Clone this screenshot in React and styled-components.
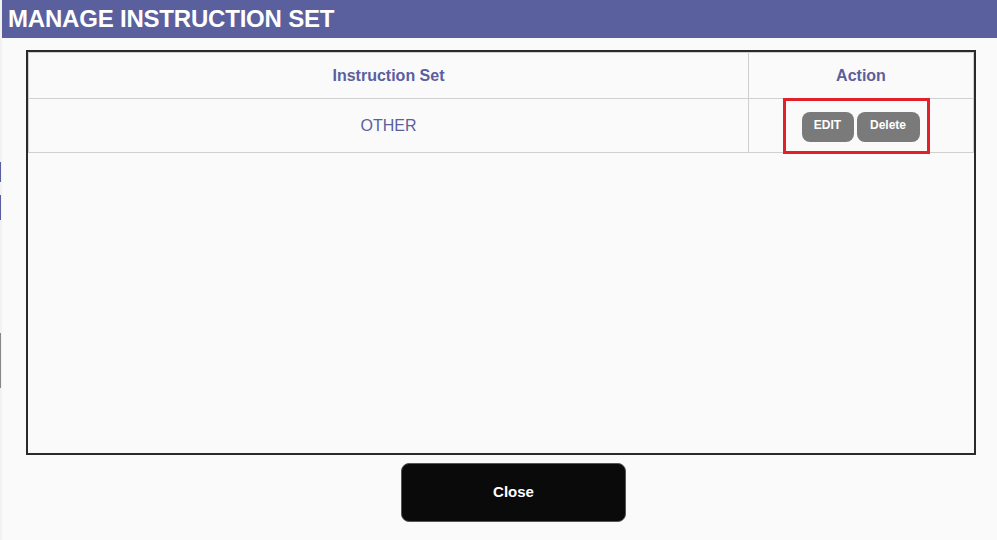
import React from 'react';
import styled, { createGlobalStyle } from 'styled-components';

const GlobalStyle = createGlobalStyle`
    html, body {
        margin: 0;
        padding: 0;
        background: #fafafa;
        font-family: "Liberation Sans", Arial, sans-serif;
    }
`;

const Page = styled.div`
    display: flex;
    width: 997px;
    height: 540px;
    overflow: hidden;
`;

// the app behind the modal peeks through at the left edge
const Behind = styled.div`
    width: 2px;
    display: flex;
    flex-direction: column;
    background: #f2f2f2;

    span {
        display: block;
        width: 1px;
    }
`;

const Modal = styled.div`
    flex: 1;
    display: flex;
    flex-direction: column;
    background: #fafafa;
`;

const Header = styled.h1`
    margin: 0;
    height: 38px;
    line-height: 37px;
    padding-left: 6px;
    background: #5a5f9e;
    color: #fff;
    font-size: 24px;
    font-weight: 700;
    letter-spacing: -0.2px;
`;

const Body = styled.div`
    padding: 12px 21px 0 24px;
`;

const Frame = styled.div`
    height: 405px;
    box-sizing: border-box;
    border: 2px solid #2a2a2a;
`;

const Table = styled.table`
    width: 100%;
    border-collapse: collapse;
    border: 1px solid #cfcfcf;

    th, td {
        border: 1px solid #cfcfcf;
        text-align: center;
        color: #5a5f9e;
        padding: 0;
    }

    th {
        height: 45px;
        font-size: 16px;
        font-weight: 700;
    }

    td {
        height: 53px;
        font-size: 16px;
    }
`;

const Highlight = styled.span`
    display: inline-flex;
    vertical-align: middle;
    gap: 3px;
    padding: 11px 7px 9px 16px;
    margin: -3px 10px -3px 0;
    border: 3px solid #e3202a;
`;

const SmallButton = styled.button`
    height: 30px;
    width: ${p => p.$w}px;
    border: none;
    border-radius: 8px;
    background: #7a7a7a;
    color: #fff;
    font-family: "Liberation Sans", Arial, sans-serif;
    font-size: 12px;
    font-weight: 700;
    padding: 0 0 3px;
    cursor: pointer;
`;

const Footer = styled.div`
    padding: 8px 0 0 375px;
`;

const CloseButton = styled.button`
    width: 225px;
    height: 59px;
    border: 1px solid #555;
    border-radius: 8px;
    background: #0a0a0a;
    color: #fff;
    font-family: "Liberation Sans", Arial, sans-serif;
    font-size: 15px;
    font-weight: 700;
    padding: 0 0 3px;
    cursor: pointer;
`;

const strip = [
    { h: 162, c: '#f2f2f2' },
    { h: 20, c: '#5a5f9e' },
    { h: 13, c: '#f2f2f2' },
    { h: 25, c: '#5a5f9e' },
    { h: 113, c: '#f2f2f2' },
    { h: 55, c: '#888' },
];

export default function App() {
    return (
        <>
            <GlobalStyle />
            <Page>
                <Behind>
                    {strip.map((s, i) => (
                        <span key={i} style={{ height: s.h, background: s.c }} />
                    ))}
                </Behind>
                <Modal>
                    <Header>MANAGE INSTRUCTION SET</Header>
                    <Body>
                        <Frame>
                            <Table>
                                <thead>
                                    <tr>
                                        <th style={{ width: 719 }}>Instruction Set</th>
                                        <th>Action</th>
                                    </tr>
                                </thead>
                                <tbody>
                                    <tr>
                                        <td>OTHER</td>
                                        <td>
                                            <Highlight>
                                                <SmallButton $w={52}>EDIT</SmallButton>
                                                <SmallButton $w={63}>Delete</SmallButton>
                                            </Highlight>
                                        </td>
                                    </tr>
                                </tbody>
                            </Table>
                        </Frame>
                        <Footer>
                            <CloseButton>Close</CloseButton>
                        </Footer>
                    </Body>
                </Modal>
            </Page>
        </>
    );
}
